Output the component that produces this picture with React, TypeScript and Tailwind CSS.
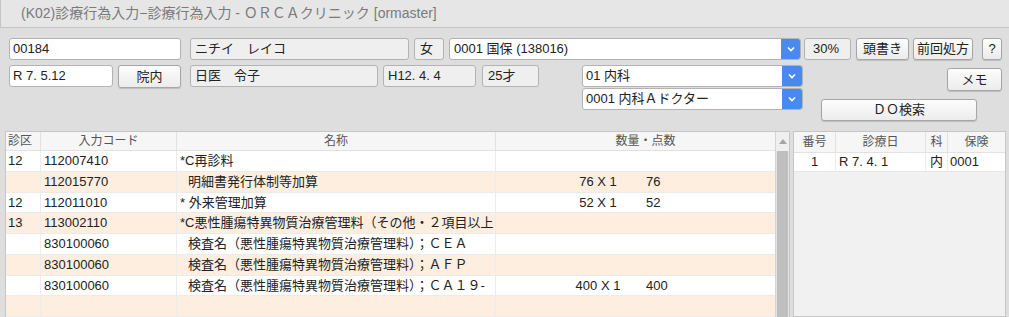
import React from 'react';

const inputBase =
    "h-[22px] border border-[#b3b3b3] rounded-[3px] flex items-center text-[13px] text-[#222] whitespace-nowrap overflow-hidden";
const btnBase =
    "border border-[#a6a6a6] rounded-[3px] bg-gradient-to-b from-[#fdfdfd] to-[#ececec] shadow-[0_1px_1px_rgba(0,0,0,0.15)] flex items-center justify-center text-[13px] text-[#222] whitespace-nowrap";

function Chevron() {
    return (
        <svg width="8" height="6" viewBox="0 0 8 6">
            <path d="M1 1.5 L4 4.5 L7 1.5" fill="none" stroke="white" strokeWidth="1.6" />
        </svg>
    );
}

interface Row {
    ku: string;
    code: string;
    name: string;
    indent?: boolean;
    qty?: string;
    pts?: string;
}

const rows: Row[] = [
    { ku: "12", code: "112007410", name: "*C再診料" },
    { ku: "", code: "112015770", name: "明細書発行体制等加算", indent: true, qty: "76 X 1", pts: "76" },
    { ku: "12", code: "112011010", name: "* 外来管理加算", qty: "52 X 1", pts: "52" },
    { ku: "13", code: "113002110", name: "*C悪性腫瘍特異物質治療管理料（その他・２項目以上" },
    { ku: "", code: "830100060", name: "検査名（悪性腫瘍特異物質治療管理料）；ＣＥＡ", indent: true },
    { ku: "", code: "830100060", name: "検査名（悪性腫瘍特異物質治療管理料）；ＡＦＰ", indent: true },
    { ku: "", code: "830100060", name: "検査名（悪性腫瘍特異物質治療管理料）；ＣＡ１９-", indent: true, qty: "400 X 1", pts: "400" },
    { ku: "", code: "", name: "" },
    { ku: "", code: "", name: "" },
];

export default function App() {
    return (
        <div className="w-[1009px] h-[317px] overflow-hidden bg-[#dedede] font-['Liberation_Sans','Noto_Sans_CJK_JP',sans-serif]">
            {/* Title bar */}
            <div className="h-[28px] bg-[#e6e6e6] border-b border-l border-[#c4c4c4] flex items-center pl-[20px] text-[14px] text-[#7a7a7a] whitespace-nowrap">
                (K02)診療行為入力−診療行為入力 - ＯＲＣＡクリニック [ormaster]
            </div>

            {/* Row 1 */}
            <div className="flex items-start mt-[10px] pl-[9px]">
                <div className={`${inputBase} w-[172px] bg-white pl-[3px]`}>00184</div>
                <div className={`${inputBase} w-[219px] ml-[9px] bg-[#efefef] pl-[4px]`}>ニチイ　レイコ</div>
                <div className={`${inputBase} w-[30px] ml-[5px] bg-[#efefef] pl-[5px]`}>女</div>
                <div className={`${inputBase} w-[352px] ml-[5px] bg-white`}>
                    <span className="flex-1 pl-[4px]">0001 国保 (138016)</span>
                    <div className="w-[19px] h-full bg-[#4a8af0] flex items-center justify-center">
                        <Chevron />
                    </div>
                </div>
                <div className={`${inputBase} w-[47px] ml-[3px] bg-[#efefef] pl-[8px]`}>30%</div>
                <div className={`${btnBase} w-[53px] h-[22px] ml-[5px]`}>頭書き</div>
                <div className={`${btnBase} w-[60px] h-[22px] ml-[4px]`}>前回処方</div>
                <div className={`${btnBase} w-[20px] h-[22px] ml-[9px]`}>?</div>
            </div>

            {/* Rows 2-3 */}
            <div className="flex items-start mt-[5px] pl-[9px] h-[56px]">
                <div className={`${inputBase} w-[104px] bg-white pl-[3px]`}>R 7. 5.12</div>
                <div className={`${btnBase} w-[63px] h-[23px] ml-[5px]`}>院内</div>
                <div className={`${inputBase} w-[188px] ml-[9px] bg-[#efefef] pl-[4px]`}>日医　令子</div>
                <div className={`${inputBase} w-[93px] ml-[5px] bg-[#efefef] pl-[4px]`}>H12. 4. 4</div>
                <div className={`${inputBase} w-[57px] ml-[6px] bg-[#efefef] pl-[5px]`}>25才</div>
                <div className="flex flex-col ml-[43px] w-[221px]">
                    <div className={`${inputBase} bg-white`}>
                        <span className="flex-1 pl-[3px]">01 内科</span>
                        <div className="w-[20px] h-full bg-[#4a8af0] flex items-center justify-center">
                            <Chevron />
                        </div>
                    </div>
                    <div className={`${inputBase} h-[20px] mt-[1px] bg-white`}>
                        <span className="flex-1 pl-[3px]">0001 内科Ａドクター</span>
                        <div className="w-[20px] h-full bg-[#4a8af0] flex items-center justify-center">
                            <Chevron />
                        </div>
                    </div>
                </div>
                <div className="flex flex-col w-[199px] mt-[3px]">
                    <div className={`${btnBase} w-[55px] h-[23px] self-end`}>メモ</div>
                    <div className={`${btnBase} w-[156px] h-[22px] ml-[18px] mt-[8px]`}>ＤＯ検索</div>
                </div>
            </div>

            {/* Tables */}
            <div className="flex mt-[10px] pl-[5px]">
                {/* Left table */}
                <div className="w-[785px] h-[186px] flex border-t border-l border-r border-[#c6c6c6] overflow-hidden">
                    <div className="w-[769px] flex flex-col">
                        <div className="flex h-[19px] bg-[#f6f6f6] border-b border-[#e2e2e2] text-[12px] text-[#555] shrink-0">
                            <div className="w-[35px] border-r border-[#e2e2e2] flex items-center pl-[2px]">診区</div>
                            <div className="w-[136px] border-r border-[#e2e2e2] flex items-center justify-center">入力コード</div>
                            <div className="w-[319px] border-r border-[#e2e2e2] flex items-center justify-center">名称</div>
                            <div className="flex-1 flex items-center justify-center pl-[20px]">数量・点数</div>
                        </div>
                        {rows.map((r, i) => (
                            <div
                                key={i}
                                className={`flex h-[20.75px] shrink-0 border-b border-[#ebebeb] text-[13px] text-[#222] whitespace-nowrap ${i % 2 === 1 ? "bg-[#fdeee0]" : "bg-white"}`}
                            >
                                <div className="w-[35px] border-r border-[#ececec] flex items-center pl-[2px]">{r.ku}</div>
                                <div className="w-[136px] border-r border-[#ececec] flex items-center pl-[3px]">{r.code}</div>
                                <div className={`w-[319px] border-r border-[#ececec] flex items-center overflow-hidden ${r.indent ? "pl-[11px]" : "pl-[3px]"}`}>
                                    {r.name}
                                </div>
                                <div className="flex-1 flex items-center">
                                    <span className="w-[90px] ml-[57px] text-center">{r.qty}</span>
                                    <span className="ml-[3px]">{r.pts}</span>
                                </div>
                            </div>
                        ))}
                    </div>
                    {/* Scrollbar */}
                    <div className="w-[14px] flex flex-col bg-[#e4e4e4] border-l border-[#d4d4d4]">
                        <div className="h-[19px] bg-[#efefef] flex items-center justify-center shrink-0">
                            <svg width="8" height="5" viewBox="0 0 8 5">
                                <path d="M0 5 L4 0 L8 5 Z" fill="#a5a5a5" />
                            </svg>
                        </div>
                        <div className="flex-1 mx-[1px] bg-[#bfbfbf]" />
                    </div>
                </div>

                {/* Right panel */}
                <div className="w-[213px] h-[186px] ml-[3px] border border-[#c6c6c6] bg-[#f1f1f1] overflow-hidden">
                    <div className="flex h-[21px] bg-[#f6f6f6] border-b border-[#e2e2e2] text-[12px] text-[#555]">
                        <div className="w-[42px] border-r border-[#e2e2e2] flex items-center justify-center">番号</div>
                        <div className="w-[90px] border-r border-[#e2e2e2] flex items-center justify-center">診療日</div>
                        <div className="w-[22px] border-r border-[#e2e2e2] flex items-center justify-center">科</div>
                        <div className="flex-1 flex items-center justify-center">保険</div>
                    </div>
                    <div className="flex h-[19px] bg-white border-b border-[#e6e6e6] text-[13px] text-[#222]">
                        <div className="w-[42px] border-r border-[#ececec] flex items-center justify-center">1</div>
                        <div className="w-[90px] border-r border-[#ececec] flex items-center pl-[3px]">R 7. 4. 1</div>
                        <div className="w-[22px] border-r border-[#ececec] flex items-center justify-center">内</div>
                        <div className="flex-1 flex items-center pl-[2px]">0001</div>
                    </div>
                </div>
            </div>
        </div>
    );
}
